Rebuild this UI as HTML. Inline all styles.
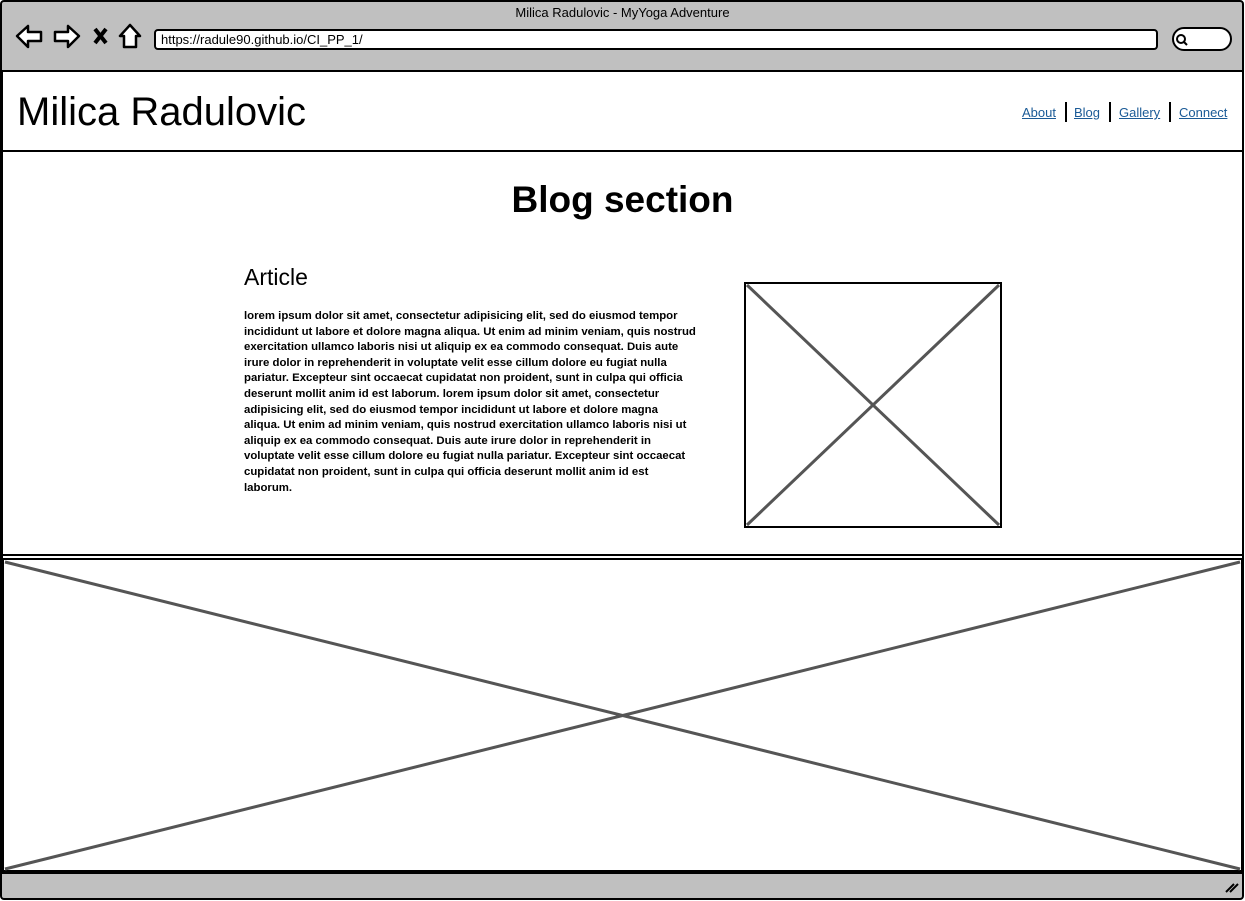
<!DOCTYPE html>
<html><head><meta charset="utf-8"><style>
*{margin:0;padding:0;box-sizing:border-box}
body{width:1245px;height:901px;background:#fff;position:relative;overflow:hidden;font-family:"Liberation Sans",sans-serif;color:#000}
.abs{position:absolute}
</style></head><body>
<svg class="abs" style="left:0;top:0" width="1245" height="901">
<rect x="1" y="1" width="1242" height="898" fill="#c0c0c0" stroke="#000" stroke-width="2" rx="3"/>
<rect x="2" y="71" width="1241" height="802" fill="#fff" stroke="#000" stroke-width="2"/>
<line x1="2" y1="151" x2="1243" y2="151" stroke="#000" stroke-width="2"/>
<line x1="2" y1="555" x2="1243" y2="555" stroke="#000" stroke-width="2"/>
<rect x="3" y="559" width="1239" height="312" fill="#fff" stroke="#000" stroke-width="2"/>
<line x1="5" y1="869" x2="1240" y2="562" stroke="#555" stroke-width="3"/>
<line x1="5" y1="562" x2="1240" y2="869" stroke="#555" stroke-width="3"/>
<rect x="745" y="283" width="256" height="244" fill="#fff" stroke="#000" stroke-width="2"/>
<line x1="747" y1="285" x2="999" y2="525" stroke="#555" stroke-width="3"/>
<line x1="999" y1="285" x2="747" y2="525" stroke="#555" stroke-width="3"/>
<rect x="155" y="30" width="1002" height="19" rx="3" fill="#fff" stroke="#000" stroke-width="2"/>
<rect x="1173" y="28" width="58" height="22" rx="11" fill="#fff" stroke="#000" stroke-width="2"/>
<circle cx="1181" cy="39" r="4" fill="none" stroke="#000" stroke-width="2"/>
<line x1="1184" y1="42" x2="1187" y2="45" stroke="#000" stroke-width="2"/>
<path d="M17 36 L28 26 L28 32 L41 32 L41 41 L28 41 L28 47 Z" fill="#fff" stroke="#000" stroke-width="2.5" stroke-linejoin="round"/>
<path d="M79 36 L68 26 L68 32 L55 32 L55 41 L68 41 L68 47 Z" fill="#fff" stroke="#000" stroke-width="2.5" stroke-linejoin="round"/>
<path d="M95 29 L106 43 M106 29 L95 43" stroke="#000" stroke-width="4"/>
<path d="M130 25 L120 36 L124 36 L124 47 L136 47 L136 36 L140 36 Z" fill="#fff" stroke="#000" stroke-width="2.5" stroke-linejoin="round"/>
<line x1="1066" y1="102" x2="1066" y2="122" stroke="#000" stroke-width="2"/>
<line x1="1110" y1="102" x2="1110" y2="122" stroke="#000" stroke-width="2"/>
<line x1="1170" y1="102" x2="1170" y2="122" stroke="#000" stroke-width="2"/>
<path d="M1226 892 L1234 884 M1230 892 L1238 884" stroke="#000" stroke-width="2"/>
</svg>
<div class="abs" style="left:0;width:1245px;top:5px;text-align:center;font-size:13px">Milica Radulovic - MyYoga Adventure</div>
<div class="abs" style="left:161px;top:32px;font-size:13px">https://radule90.github.io/CI_PP_1/</div>
<div class="abs" style="left:17px;top:90px;font-size:40px">Milica Radulovic</div>
<div class="abs" style="left:1022px;top:105px;font-size:13px;color:#1a5a96;text-decoration:underline">About</div>
<div class="abs" style="left:1074px;top:105px;font-size:13px;color:#1a5a96;text-decoration:underline">Blog</div>
<div class="abs" style="left:1119px;top:105px;font-size:13px;color:#1a5a96;text-decoration:underline">Gallery</div>
<div class="abs" style="left:1179px;top:105px;font-size:13px;color:#1a5a96;text-decoration:underline">Connect</div>
<div class="abs" style="left:0;width:1245px;top:179px;text-align:center;font-size:37px;font-weight:bold">Blog section</div>
<div class="abs" style="left:244px;top:264px;font-size:23px">Article</div>
<div class="abs" style="left:244px;top:309px;width:452px;font-size:11.4px;line-height:15.6px;font-weight:bold">lorem ipsum dolor sit amet, consectetur adipisicing elit, sed do eiusmod tempor incididunt ut labore et dolore magna aliqua. Ut enim ad minim veniam, quis nostrud exercitation ullamco laboris nisi ut aliquip ex ea commodo consequat. Duis aute irure dolor in reprehenderit in voluptate velit esse cillum dolore eu fugiat nulla pariatur. Excepteur sint occaecat cupidatat non proident, sunt in culpa qui officia deserunt mollit anim id est laborum. lorem ipsum dolor sit amet, consectetur adipisicing elit, sed do eiusmod tempor incididunt ut labore et dolore magna aliqua. Ut enim ad minim veniam, quis nostrud exercitation ullamco laboris nisi ut aliquip ex ea commodo consequat. Duis aute irure dolor in reprehenderit in voluptate velit esse cillum dolore eu fugiat nulla pariatur. Excepteur sint occaecat cupidatat non proident, sunt in culpa qui officia deserunt mollit anim id est laborum.</div>
</body></html>
